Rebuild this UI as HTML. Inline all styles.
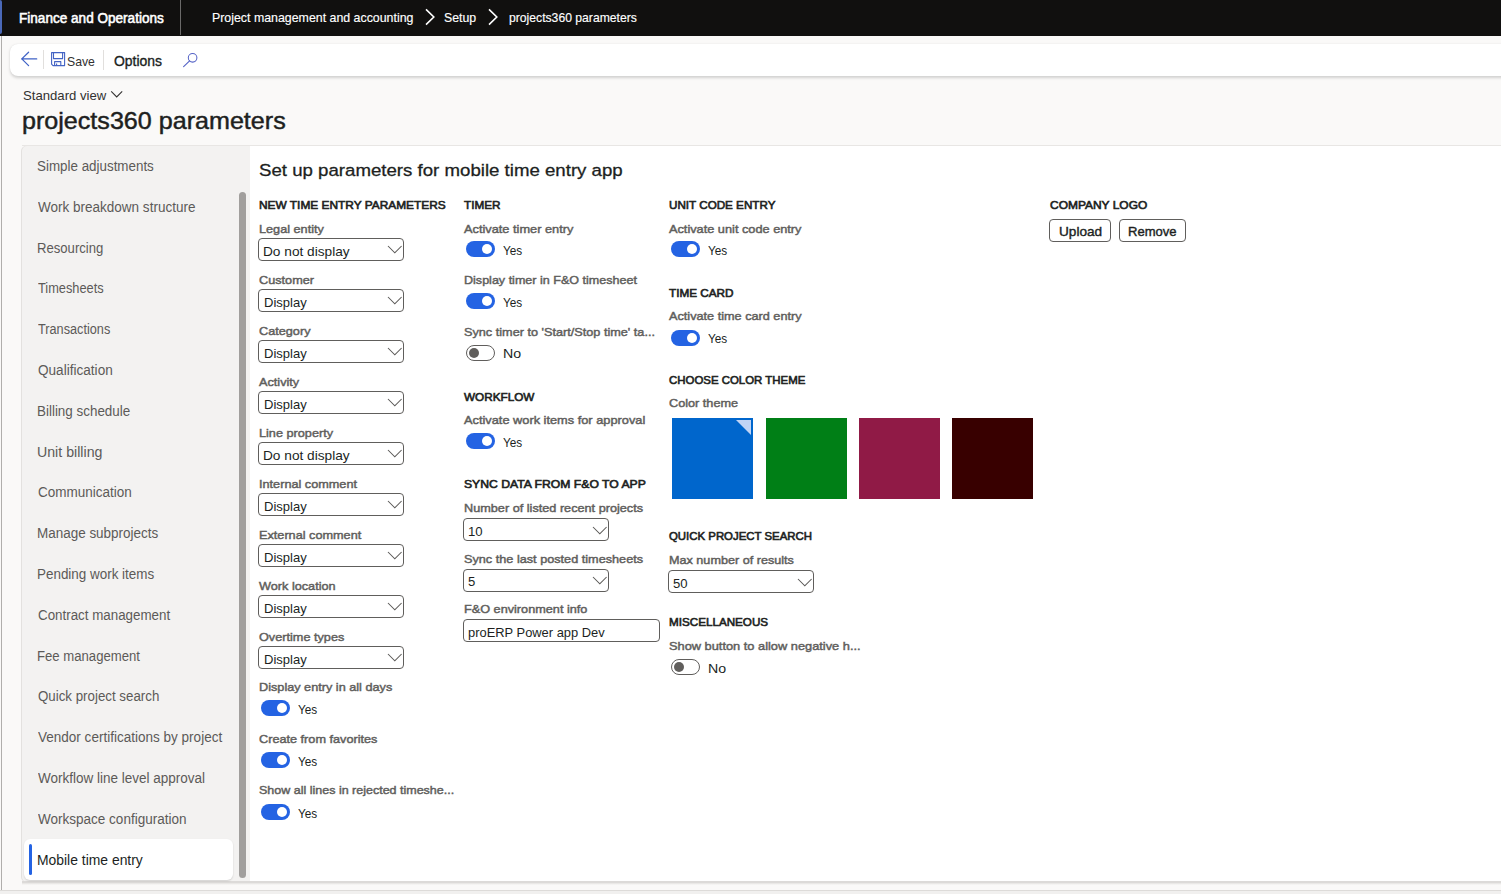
<!DOCTYPE html>
<html><head><meta charset="utf-8">
<style>
*{box-sizing:border-box;margin:0;padding:0}
html,body{width:1501px;height:894px;overflow:hidden}
body{position:relative;background:#faf9f8;font-family:"Liberation Sans",sans-serif;color:#201f1e}
.t{position:absolute;white-space:nowrap;transform-origin:0 0}
.s{position:absolute;overflow:visible}
.r{position:absolute}
.box{position:absolute;border:1px solid #605e5c;border-radius:4px;background:#fff}
.tgon{position:absolute;width:29px;height:16px;border-radius:8px;background:#2463e3}
.tgon i{position:absolute;left:16px;top:3px;width:10px;height:10px;border-radius:50%;background:#fff}
.tgoff{position:absolute;width:29px;height:16px;border-radius:8px;background:#fff;border:1px solid #605e5c}
.tgoff i{position:absolute;left:2px;top:2px;width:10px;height:10px;border-radius:50%;background:#605e5c}
.btn{position:absolute;border:1px solid #605e5c;border-radius:4px;background:#fff}
</style></head>
<body>
<!-- header -->
<div class=r style="left:0;top:0;width:1501px;height:36px;background:#11100f"></div>
<div class=r style="left:0;top:0;width:2px;height:34px;background:#4a68b8;border-radius:0 2px 2px 0"></div>
<div class=r style="left:180px;top:0;width:1px;height:35px;background:#6b6a69;border-radius:0 0 1px 1px"></div>
<svg class=s style="left:424px;top:8px" width="12" height="18" viewBox="0 0 12 18"><path d="M2 1.4 L9.8 9 L2 16.6" fill="none" stroke="#fff" stroke-width="1.6"/></svg>
<svg class=s style="left:487px;top:8px" width="12" height="18" viewBox="0 0 12 18"><path d="M2 1.4 L9.8 9 L2 16.6" fill="none" stroke="#fff" stroke-width="1.6"/></svg>
<!-- left frame line -->
<div class=r style="left:1px;top:36px;width:1px;height:854px;background:#b0aeac"></div>
<!-- toolbar -->
<div class=r style="left:10px;top:44px;width:1520px;height:32px;background:#fff;border-radius:8px;box-shadow:0 1.2px 3px rgba(0,0,0,.16),0 0 1px rgba(0,0,0,.06)"></div>
<svg class=s style="left:0;top:0" width="40" height="80" viewBox="0 0 40 80"><path d="M36.7 58.9 H21.6 M28.6 52.2 L21.8 58.9 L28.6 65.6" fill="none" stroke="#3f62c6" stroke-width="1.25" stroke-linecap="round" stroke-linejoin="round"/></svg>
<div class=r style="left:43px;top:50px;width:1px;height:19px;background:#e1dfdd"></div>
<svg class=s style="left:51px;top:52px" width="15" height="15" viewBox="0 0 15 15"><path d="M0.6 0.6 H13.6 V13.6 H2 L0.6 12.2 Z M2.5 0.6 V6.6 H11.6 V0.6 M3.6 13.6 V9.6 H9.8 V13.6 M5.6 11.5 V13.6" fill="none" stroke="#4363c4" stroke-width="1.1" stroke-linejoin="round"/></svg>
<div class=r style="left:103px;top:50px;width:1px;height:20px;background:#e1dfdd"></div>
<svg class=s style="left:176px;top:46px" width="26" height="26" viewBox="0 0 26 26"><circle cx="16.6" cy="11.8" r="4.3" fill="none" stroke="#5563c6" stroke-width="1.05"/><path d="M13.6 14.8 L7.6 20.6" stroke="#5563c6" stroke-width="1.1" stroke-linecap="round"/></svg>
<svg class=s style="left:110px;top:90px" width="14" height="9" viewBox="0 0 14 9"><path d="M1.2 1.4 L6.7 6.9 L12.2 1.4" fill="none" stroke="#323130" stroke-width="1.05"/></svg>
<!-- content frame -->
<div class=r style="left:22px;top:145px;width:1479px;height:1px;background:#e8e6e4"></div>
<div class=r style="left:22px;top:146px;width:228px;height:736px;background:#f3f2f1;border-radius:5px 0 0 5px;box-shadow:-1px 0 0 #e3e1df"></div>
<div class=r style="left:250px;top:146px;width:1251px;height:736px;background:#fff"></div>
<div class=r style="left:22px;top:881px;width:1479px;height:1.5px;background:#dcdad8"></div>
<div class=r style="left:22px;top:882.5px;width:1479px;height:2px;background:linear-gradient(#e4e2e0,#faf9f8)"></div>
<div class=r style="left:0;top:890px;width:1501px;height:1.2px;background:#dddbd9"></div>
<div class=r style="left:0;top:891.2px;width:1501px;height:3px;background:#f1f0ef"></div>
<!-- selected nav item -->
<div class=r style="left:24px;top:839px;width:209px;height:41px;background:#fff;border-radius:6px;box-shadow:0 1px 2px rgba(0,0,0,.14)"></div>
<div class=r style="left:29px;top:844px;width:3px;height:31px;background:#2463e3;border-radius:2px"></div>
<!-- nav scrollbar -->
<div class=r style="left:239px;top:192px;width:7px;height:686px;background:#a19f9d;border-radius:4px"></div>
<!-- color squares -->
<div class=r style="left:672px;top:418px;width:81px;height:81px;background:#0066cc"></div>
<svg class=s style="left:672px;top:418px" width="81" height="81"><path d="M64 2 H79 V17 Z" fill="#c1d4f5"/></svg>
<div class=r style="left:766px;top:418px;width:81px;height:81px;background:#007f16"></div>
<div class=r style="left:859px;top:418px;width:81px;height:81px;background:#901a46"></div>
<div class=r style="left:952px;top:418px;width:81px;height:81px;background:#380000"></div>
<!-- buttons -->
<div class=btn style="left:1049px;top:219.3px;width:62px;height:22.5px"></div>
<div class=btn style="left:1119px;top:219.3px;width:67px;height:22.5px"></div>
<div class=box style='left:258.2px;top:238.2px;width:146px;height:23px'></div>
<svg class=s style='left:387.2px;top:245.39999999999998px' width='15.6' height='8.8' viewBox='-1 -1 15.6 8.8'><path d='M0 0 L6.8 6.8 L13.6 0' fill='none' stroke='#5a5856' stroke-width='1.05'/></svg>
<div class=box style='left:258.2px;top:289.2px;width:146px;height:23px'></div>
<svg class=s style='left:387.2px;top:296.4px' width='15.6' height='8.8' viewBox='-1 -1 15.6 8.8'><path d='M0 0 L6.8 6.8 L13.6 0' fill='none' stroke='#5a5856' stroke-width='1.05'/></svg>
<div class=box style='left:258.2px;top:340.2px;width:146px;height:23px'></div>
<svg class=s style='left:387.2px;top:347.4px' width='15.6' height='8.8' viewBox='-1 -1 15.6 8.8'><path d='M0 0 L6.8 6.8 L13.6 0' fill='none' stroke='#5a5856' stroke-width='1.05'/></svg>
<div class=box style='left:258.2px;top:391.2px;width:146px;height:23px'></div>
<svg class=s style='left:387.2px;top:398.4px' width='15.6' height='8.8' viewBox='-1 -1 15.6 8.8'><path d='M0 0 L6.8 6.8 L13.6 0' fill='none' stroke='#5a5856' stroke-width='1.05'/></svg>
<div class=box style='left:258.2px;top:442.2px;width:146px;height:23px'></div>
<svg class=s style='left:387.2px;top:449.4px' width='15.6' height='8.8' viewBox='-1 -1 15.6 8.8'><path d='M0 0 L6.8 6.8 L13.6 0' fill='none' stroke='#5a5856' stroke-width='1.05'/></svg>
<div class=box style='left:258.2px;top:493.2px;width:146px;height:23px'></div>
<svg class=s style='left:387.2px;top:500.4px' width='15.6' height='8.8' viewBox='-1 -1 15.6 8.8'><path d='M0 0 L6.8 6.8 L13.6 0' fill='none' stroke='#5a5856' stroke-width='1.05'/></svg>
<div class=box style='left:258.2px;top:544.2px;width:146px;height:23px'></div>
<svg class=s style='left:387.2px;top:551.4000000000001px' width='15.6' height='8.8' viewBox='-1 -1 15.6 8.8'><path d='M0 0 L6.8 6.8 L13.6 0' fill='none' stroke='#5a5856' stroke-width='1.05'/></svg>
<div class=box style='left:258.2px;top:595.2px;width:146px;height:23px'></div>
<svg class=s style='left:387.2px;top:602.4000000000001px' width='15.6' height='8.8' viewBox='-1 -1 15.6 8.8'><path d='M0 0 L6.8 6.8 L13.6 0' fill='none' stroke='#5a5856' stroke-width='1.05'/></svg>
<div class=box style='left:258.2px;top:646.2px;width:146px;height:23px'></div>
<svg class=s style='left:387.2px;top:653.4000000000001px' width='15.6' height='8.8' viewBox='-1 -1 15.6 8.8'><path d='M0 0 L6.8 6.8 L13.6 0' fill='none' stroke='#5a5856' stroke-width='1.05'/></svg>
<div class=box style='left:463.0px;top:518.3px;width:146px;height:23px'></div>
<svg class=s style='left:592.0px;top:525.5px' width='15.6' height='8.8' viewBox='-1 -1 15.6 8.8'><path d='M0 0 L6.8 6.8 L13.6 0' fill='none' stroke='#5a5856' stroke-width='1.05'/></svg>
<div class=box style='left:463.0px;top:568.6px;width:146px;height:23px'></div>
<svg class=s style='left:592.0px;top:575.8000000000001px' width='15.6' height='8.8' viewBox='-1 -1 15.6 8.8'><path d='M0 0 L6.8 6.8 L13.6 0' fill='none' stroke='#5a5856' stroke-width='1.05'/></svg>
<div class=box style='left:668.0px;top:570.4px;width:146px;height:23px'></div>
<svg class=s style='left:797.0px;top:577.6px' width='15.6' height='8.8' viewBox='-1 -1 15.6 8.8'><path d='M0 0 L6.8 6.8 L13.6 0' fill='none' stroke='#5a5856' stroke-width='1.05'/></svg>
<div class=box style='left:463.0px;top:619.4px;width:197px;height:23px'></div>
<div class=tgon style='left:261px;top:700.2px'><i></i></div>
<div class=tgon style='left:261px;top:752.0px'><i></i></div>
<div class=tgon style='left:261px;top:804.0px'><i></i></div>
<div class=tgon style='left:466px;top:241.0px'><i></i></div>
<div class=tgon style='left:466px;top:293.0px'><i></i></div>
<div class=tgoff style='left:466px;top:345.0px'><i></i></div>
<div class=tgon style='left:466px;top:433.2px'><i></i></div>
<div class=tgon style='left:671px;top:241.3px'><i></i></div>
<div class=tgon style='left:671px;top:329.5px'><i></i></div>
<div class=tgoff style='left:671px;top:659.4px'><i></i></div>
<div class=t style='left:18.63px;top:11.00px;font-size:14.0px;font-weight:normal;line-height:14.0px;-webkit-text-stroke:0.55px #ffffff;color:#ffffff;transform:scaleX(0.9691)'>Finance and Operations</div>
<div class=t style='left:211.50px;top:12.00px;font-size:12.4px;font-weight:normal;line-height:12.4px;-webkit-text-stroke:0.15px #ffffff;color:#ffffff;transform:scaleX(0.9980)'>Project management and accounting</div>
<div class=t style='left:444.21px;top:12.00px;font-size:12.4px;font-weight:normal;line-height:12.4px;-webkit-text-stroke:0.15px #ffffff;color:#ffffff;transform:scaleX(0.9935)'>Setup</div>
<div class=t style='left:508.50px;top:12.00px;font-size:12.4px;font-weight:normal;line-height:12.4px;-webkit-text-stroke:0.15px #ffffff;color:#ffffff;transform:scaleX(0.9823)'>projects360 parameters</div>
<div class=t style='left:67.40px;top:55.00px;font-size:13.6px;font-weight:normal;line-height:13.6px;color:#323130;transform:scaleX(0.9000)'>Save</div>
<div class=t style='left:113.60px;top:54.00px;font-size:14.0px;font-weight:normal;line-height:14.0px;-webkit-text-stroke:0.35px #201f1e;color:#201f1e;transform:scaleX(0.9958)'>Options</div>
<div class=t style='left:22.76px;top:90.00px;font-size:12.6px;font-weight:normal;line-height:12.6px;color:#323130;transform:scaleX(1.0430)'>Standard view</div>
<div class=t style='left:22.32px;top:110.00px;font-size:23.2px;font-weight:normal;line-height:23.2px;-webkit-text-stroke:0.45px #201f1e;color:#201f1e;transform:scaleX(1.0826)'>projects360 parameters</div>
<div class=t style='left:36.74px;top:159.00px;font-size:14.0px;font-weight:normal;line-height:14.0px;color:#5c5a58;transform:scaleX(0.9562)'>Simple adjustments</div>
<div class=t style='left:37.70px;top:200.00px;font-size:14.0px;font-weight:normal;line-height:14.0px;color:#5c5a58;transform:scaleX(0.9650)'>Work breakdown structure</div>
<div class=t style='left:36.76px;top:241.00px;font-size:14.0px;font-weight:normal;line-height:14.0px;color:#5c5a58;transform:scaleX(0.9362)'>Resourcing</div>
<div class=t style='left:37.70px;top:281.00px;font-size:14.0px;font-weight:normal;line-height:14.0px;color:#5c5a58;transform:scaleX(0.9139)'>Timesheets</div>
<div class=t style='left:37.70px;top:322.00px;font-size:14.0px;font-weight:normal;line-height:14.0px;color:#5c5a58;transform:scaleX(0.9075)'>Transactions</div>
<div class=t style='left:37.70px;top:363.00px;font-size:14.0px;font-weight:normal;line-height:14.0px;color:#5c5a58;transform:scaleX(0.9701)'>Qualification</div>
<div class=t style='left:36.74px;top:404.00px;font-size:14.0px;font-weight:normal;line-height:14.0px;color:#5c5a58;transform:scaleX(0.9583)'>Billing schedule</div>
<div class=t style='left:36.69px;top:445.00px;font-size:14.0px;font-weight:normal;line-height:14.0px;color:#5c5a58;transform:scaleX(1.0127)'>Unit billing</div>
<div class=t style='left:37.70px;top:485.00px;font-size:14.0px;font-weight:normal;line-height:14.0px;color:#5c5a58;transform:scaleX(0.9649)'>Communication</div>
<div class=t style='left:36.74px;top:526.00px;font-size:14.0px;font-weight:normal;line-height:14.0px;color:#5c5a58;transform:scaleX(0.9616)'>Manage subprojects</div>
<div class=t style='left:36.74px;top:567.00px;font-size:14.0px;font-weight:normal;line-height:14.0px;color:#5c5a58;transform:scaleX(0.9595)'>Pending work items</div>
<div class=t style='left:37.70px;top:608.00px;font-size:14.0px;font-weight:normal;line-height:14.0px;color:#5c5a58;transform:scaleX(0.9540)'>Contract management</div>
<div class=t style='left:36.76px;top:649.00px;font-size:14.0px;font-weight:normal;line-height:14.0px;color:#5c5a58;transform:scaleX(0.9385)'>Fee management</div>
<div class=t style='left:37.70px;top:689.00px;font-size:14.0px;font-weight:normal;line-height:14.0px;color:#5c5a58;transform:scaleX(0.9504)'>Quick project search</div>
<div class=t style='left:37.70px;top:730.00px;font-size:14.0px;font-weight:normal;line-height:14.0px;color:#5c5a58;transform:scaleX(0.9660)'>Vendor certifications by project</div>
<div class=t style='left:37.70px;top:771.00px;font-size:14.0px;font-weight:normal;line-height:14.0px;color:#5c5a58;transform:scaleX(0.9642)'>Workflow line level approval</div>
<div class=t style='left:37.70px;top:812.00px;font-size:14.0px;font-weight:normal;line-height:14.0px;color:#5c5a58;transform:scaleX(0.9654)'>Workspace configuration</div>
<div class=t style='left:36.71px;top:853.00px;font-size:14.0px;font-weight:normal;line-height:14.0px;color:#201f1e;transform:scaleX(0.9925)'>Mobile time entry</div>
<div class=t style='left:258.90px;top:162.00px;font-size:17.4px;font-weight:normal;line-height:17.4px;-webkit-text-stroke:0.3px #201f1e;color:#201f1e;transform:scaleX(1.0720)'>Set up parameters for mobile time entry app</div>
<div class=t style='left:258.50px;top:200.00px;font-size:11.2px;font-weight:normal;line-height:11.2px;-webkit-text-stroke:0.6px #201f1e;color:#201f1e;transform:scaleX(1.0625)'>NEW TIME ENTRY PARAMETERS</div>
<div class=t style='left:463.50px;top:200.00px;font-size:11.2px;font-weight:normal;line-height:11.2px;-webkit-text-stroke:0.6px #201f1e;color:#201f1e;transform:scaleX(1.0493)'>TIMER</div>
<div class=t style='left:668.50px;top:200.00px;font-size:11.2px;font-weight:normal;line-height:11.2px;-webkit-text-stroke:0.6px #201f1e;color:#201f1e;transform:scaleX(1.0417)'>UNIT CODE ENTRY</div>
<div class=t style='left:1049.60px;top:200.00px;font-size:11.2px;font-weight:normal;line-height:11.2px;-webkit-text-stroke:0.6px #201f1e;color:#201f1e;transform:scaleX(1.0692)'>COMPANY LOGO</div>
<div class=t style='left:463.50px;top:392.00px;font-size:11.2px;font-weight:normal;line-height:11.2px;-webkit-text-stroke:0.6px #201f1e;color:#201f1e;transform:scaleX(1.0493)'>WORKFLOW</div>
<div class=t style='left:463.50px;top:479.00px;font-size:11.2px;font-weight:normal;line-height:11.2px;-webkit-text-stroke:0.6px #201f1e;color:#201f1e;transform:scaleX(1.0886)'>SYNC DATA FROM F&amp;O TO APP</div>
<div class=t style='left:668.50px;top:288.00px;font-size:11.2px;font-weight:normal;line-height:11.2px;-webkit-text-stroke:0.6px #201f1e;color:#201f1e;transform:scaleX(1.0493)'>TIME CARD</div>
<div class=t style='left:668.50px;top:375.00px;font-size:11.2px;font-weight:normal;line-height:11.2px;-webkit-text-stroke:0.6px #201f1e;color:#201f1e;transform:scaleX(1.0216)'>CHOOSE COLOR THEME</div>
<div class=t style='left:668.50px;top:531.00px;font-size:11.2px;font-weight:normal;line-height:11.2px;-webkit-text-stroke:0.6px #201f1e;color:#201f1e;transform:scaleX(1.0193)'>QUICK PROJECT SEARCH</div>
<div class=t style='left:668.50px;top:617.00px;font-size:11.2px;font-weight:normal;line-height:11.2px;-webkit-text-stroke:0.6px #201f1e;color:#201f1e;transform:scaleX(1.0421)'>MISCELLANEOUS</div>
<div class=t style='left:258.50px;top:223.00px;font-size:11.6px;font-weight:normal;line-height:11.6px;-webkit-text-stroke:0.45px #605e5c;color:#605e5c;transform:scaleX(1.0941)'>Legal entity</div>
<div class=t style='left:258.50px;top:274.00px;font-size:11.6px;font-weight:normal;line-height:11.6px;-webkit-text-stroke:0.45px #605e5c;color:#605e5c;transform:scaleX(1.0941)'>Customer</div>
<div class=t style='left:258.50px;top:325.00px;font-size:11.6px;font-weight:normal;line-height:11.6px;-webkit-text-stroke:0.45px #605e5c;color:#605e5c;transform:scaleX(1.0941)'>Category</div>
<div class=t style='left:258.50px;top:376.00px;font-size:11.6px;font-weight:normal;line-height:11.6px;-webkit-text-stroke:0.45px #605e5c;color:#605e5c;transform:scaleX(1.0941)'>Activity</div>
<div class=t style='left:258.50px;top:427.00px;font-size:11.6px;font-weight:normal;line-height:11.6px;-webkit-text-stroke:0.45px #605e5c;color:#605e5c;transform:scaleX(1.0941)'>Line property</div>
<div class=t style='left:258.50px;top:478.00px;font-size:11.6px;font-weight:normal;line-height:11.6px;-webkit-text-stroke:0.45px #605e5c;color:#605e5c;transform:scaleX(1.0941)'>Internal comment</div>
<div class=t style='left:258.50px;top:529.00px;font-size:11.6px;font-weight:normal;line-height:11.6px;-webkit-text-stroke:0.45px #605e5c;color:#605e5c;transform:scaleX(1.0941)'>External comment</div>
<div class=t style='left:258.50px;top:580.00px;font-size:11.6px;font-weight:normal;line-height:11.6px;-webkit-text-stroke:0.45px #605e5c;color:#605e5c;transform:scaleX(1.0941)'>Work location</div>
<div class=t style='left:258.50px;top:631.00px;font-size:11.6px;font-weight:normal;line-height:11.6px;-webkit-text-stroke:0.45px #605e5c;color:#605e5c;transform:scaleX(1.0941)'>Overtime types</div>
<div class=t style='left:258.50px;top:681.00px;font-size:11.6px;font-weight:normal;line-height:11.6px;-webkit-text-stroke:0.45px #605e5c;color:#605e5c;transform:scaleX(1.0941)'>Display entry in all days</div>
<div class=t style='left:258.50px;top:733.00px;font-size:11.6px;font-weight:normal;line-height:11.6px;-webkit-text-stroke:0.45px #605e5c;color:#605e5c;transform:scaleX(1.0941)'>Create from favorites</div>
<div class=t style='left:258.50px;top:784.00px;font-size:11.6px;font-weight:normal;line-height:11.6px;-webkit-text-stroke:0.45px #605e5c;color:#605e5c;transform:scaleX(1.0779)'>Show all lines in rejected timeshe...</div>
<div class=t style='left:463.70px;top:223.00px;font-size:11.6px;font-weight:normal;line-height:11.6px;-webkit-text-stroke:0.45px #605e5c;color:#605e5c;transform:scaleX(1.1020)'>Activate timer entry</div>
<div class=t style='left:463.70px;top:274.00px;font-size:11.6px;font-weight:normal;line-height:11.6px;-webkit-text-stroke:0.45px #605e5c;color:#605e5c;transform:scaleX(1.0825)'>Display timer in F&amp;O timesheet</div>
<div class=t style='left:463.70px;top:326.00px;font-size:11.6px;font-weight:normal;line-height:11.6px;-webkit-text-stroke:0.45px #605e5c;color:#605e5c;transform:scaleX(1.0941)'>Sync timer to 'Start/Stop time' ta...</div>
<div class=t style='left:463.70px;top:414.00px;font-size:11.6px;font-weight:normal;line-height:11.6px;-webkit-text-stroke:0.45px #605e5c;color:#605e5c;transform:scaleX(1.1030)'>Activate work items for approval</div>
<div class=t style='left:463.70px;top:502.00px;font-size:11.6px;font-weight:normal;line-height:11.6px;-webkit-text-stroke:0.45px #605e5c;color:#605e5c;transform:scaleX(1.0941)'>Number of listed recent projects</div>
<div class=t style='left:463.70px;top:553.00px;font-size:11.6px;font-weight:normal;line-height:11.6px;-webkit-text-stroke:0.45px #605e5c;color:#605e5c;transform:scaleX(1.0941)'>Sync the last posted timesheets</div>
<div class=t style='left:463.70px;top:603.00px;font-size:11.6px;font-weight:normal;line-height:11.6px;-webkit-text-stroke:0.45px #605e5c;color:#605e5c;transform:scaleX(1.0941)'>F&amp;O environment info</div>
<div class=t style='left:668.50px;top:223.00px;font-size:11.6px;font-weight:normal;line-height:11.6px;-webkit-text-stroke:0.45px #605e5c;color:#605e5c;transform:scaleX(1.0992)'>Activate unit code entry</div>
<div class=t style='left:668.50px;top:310.00px;font-size:11.6px;font-weight:normal;line-height:11.6px;-webkit-text-stroke:0.45px #605e5c;color:#605e5c;transform:scaleX(1.0941)'>Activate time card entry</div>
<div class=t style='left:668.50px;top:397.00px;font-size:11.6px;font-weight:normal;line-height:11.6px;-webkit-text-stroke:0.45px #605e5c;color:#605e5c;transform:scaleX(1.0941)'>Color theme</div>
<div class=t style='left:668.50px;top:554.00px;font-size:11.6px;font-weight:normal;line-height:11.6px;-webkit-text-stroke:0.45px #605e5c;color:#605e5c;transform:scaleX(1.0887)'>Max number of results</div>
<div class=t style='left:668.50px;top:640.00px;font-size:11.6px;font-weight:normal;line-height:11.6px;-webkit-text-stroke:0.45px #605e5c;color:#605e5c;transform:scaleX(1.1052)'>Show button to allow negative h...</div>
<div class=t style='left:263.49px;top:245.00px;font-size:13.6px;font-weight:normal;line-height:13.6px;color:#201f1e;transform:scaleX(1.0059)'>Do not display</div>
<div class=t style='left:263.54px;top:296.00px;font-size:13.6px;font-weight:normal;line-height:13.6px;color:#201f1e;transform:scaleX(0.9568)'>Display</div>
<div class=t style='left:263.54px;top:347.00px;font-size:13.6px;font-weight:normal;line-height:13.6px;color:#201f1e;transform:scaleX(0.9568)'>Display</div>
<div class=t style='left:263.54px;top:398.00px;font-size:13.6px;font-weight:normal;line-height:13.6px;color:#201f1e;transform:scaleX(0.9568)'>Display</div>
<div class=t style='left:263.49px;top:449.00px;font-size:13.6px;font-weight:normal;line-height:13.6px;color:#201f1e;transform:scaleX(1.0059)'>Do not display</div>
<div class=t style='left:263.54px;top:500.00px;font-size:13.6px;font-weight:normal;line-height:13.6px;color:#201f1e;transform:scaleX(0.9568)'>Display</div>
<div class=t style='left:263.54px;top:551.00px;font-size:13.6px;font-weight:normal;line-height:13.6px;color:#201f1e;transform:scaleX(0.9568)'>Display</div>
<div class=t style='left:263.54px;top:602.00px;font-size:13.6px;font-weight:normal;line-height:13.6px;color:#201f1e;transform:scaleX(0.9568)'>Display</div>
<div class=t style='left:263.54px;top:653.00px;font-size:13.6px;font-weight:normal;line-height:13.6px;color:#201f1e;transform:scaleX(0.9568)'>Display</div>
<div class=t style='left:468.33px;top:525.00px;font-size:13.6px;font-weight:normal;line-height:13.6px;color:#201f1e;transform:scaleX(0.9658)'>10</div>
<div class=t style='left:468.33px;top:575.00px;font-size:13.6px;font-weight:normal;line-height:13.6px;color:#201f1e;transform:scaleX(0.9658)'>5</div>
<div class=t style='left:673.33px;top:577.00px;font-size:13.6px;font-weight:normal;line-height:13.6px;color:#201f1e;transform:scaleX(0.9658)'>50</div>
<div class=t style='left:468.35px;top:626.00px;font-size:13.6px;font-weight:normal;line-height:13.6px;color:#201f1e;transform:scaleX(0.9490)'>proERP Power app Dev</div>
<div class=t style='left:298.00px;top:703.00px;font-size:13.5px;font-weight:normal;line-height:13.5px;color:#201f1e;transform:scaleX(0.8727)'>Yes</div>
<div class=t style='left:298.00px;top:755.00px;font-size:13.5px;font-weight:normal;line-height:13.5px;color:#201f1e;transform:scaleX(0.8727)'>Yes</div>
<div class=t style='left:298.00px;top:807.00px;font-size:13.5px;font-weight:normal;line-height:13.5px;color:#201f1e;transform:scaleX(0.8727)'>Yes</div>
<div class=t style='left:503.00px;top:244.00px;font-size:13.5px;font-weight:normal;line-height:13.5px;color:#201f1e;transform:scaleX(0.8727)'>Yes</div>
<div class=t style='left:503.00px;top:296.00px;font-size:13.5px;font-weight:normal;line-height:13.5px;color:#201f1e;transform:scaleX(0.8727)'>Yes</div>
<div class=t style='left:502.75px;top:347.00px;font-size:13.5px;font-weight:normal;line-height:13.5px;color:#201f1e;transform:scaleX(1.0500)'>No</div>
<div class=t style='left:503.00px;top:436.00px;font-size:13.5px;font-weight:normal;line-height:13.5px;color:#201f1e;transform:scaleX(0.8727)'>Yes</div>
<div class=t style='left:708.00px;top:244.00px;font-size:13.5px;font-weight:normal;line-height:13.5px;color:#201f1e;transform:scaleX(0.8727)'>Yes</div>
<div class=t style='left:708.00px;top:332.00px;font-size:13.5px;font-weight:normal;line-height:13.5px;color:#201f1e;transform:scaleX(0.8727)'>Yes</div>
<div class=t style='left:707.75px;top:662.00px;font-size:13.5px;font-weight:normal;line-height:13.5px;color:#201f1e;transform:scaleX(1.0500)'>No</div>
<div class=t style='left:1058.70px;top:225.00px;font-size:13.6px;font-weight:normal;line-height:13.6px;-webkit-text-stroke:0.4px #201f1e;color:#201f1e;transform:scaleX(1.0023)'>Upload</div>
<div class=t style='left:1128.04px;top:225.00px;font-size:13.6px;font-weight:normal;line-height:13.6px;-webkit-text-stroke:0.4px #201f1e;color:#201f1e;transform:scaleX(0.9600)'>Remove</div>
</body></html>
